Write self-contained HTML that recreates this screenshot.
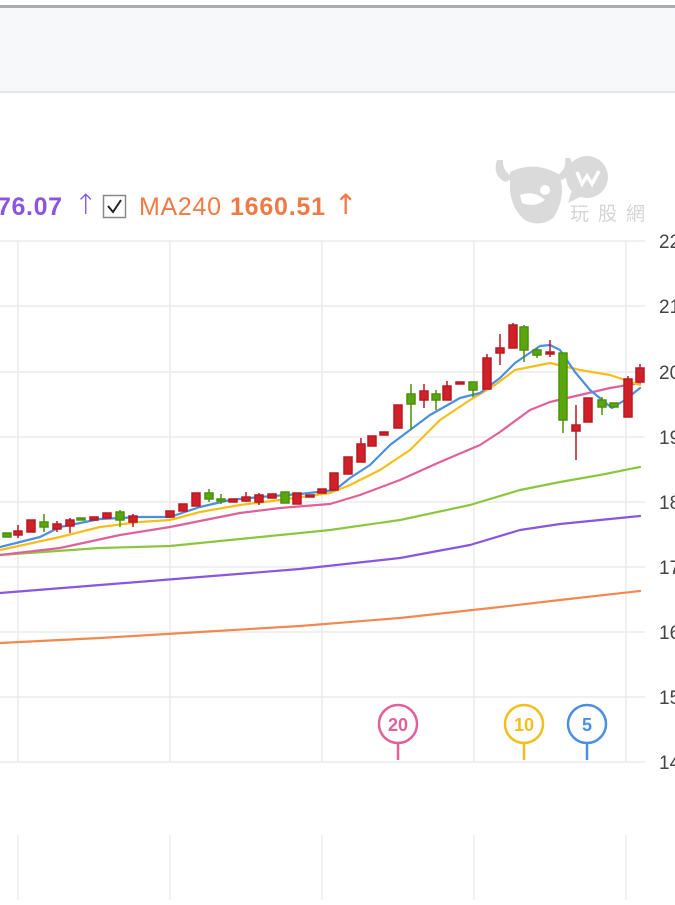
<!DOCTYPE html><html><head><meta charset="utf-8"><style>
body{margin:0;width:675px;height:900px;overflow:hidden;background:#fff;font-family:"Liberation Sans","Noto Sans CJK TC",sans-serif}
</style></head><body>
<svg width="675" height="900" viewBox="0 0 675 900" xmlns="http://www.w3.org/2000/svg">
<rect x="0" y="5" width="675" height="3" fill="#a9adb3"/>
<rect x="0" y="8" width="675" height="84" fill="#f7f8fa"/>
<rect x="0" y="91" width="675" height="2" fill="#e6e7ea"/>
<!-- logo -->
<g fill="#dadada">
<path d="M497 160 Q492 175 505 182 L515 178 Q502 172 503 160 Z"/>
<path d="M570 158 Q578 172 562 180 L556 176 Q567 170 565 158 Z"/>
<path d="M510 172 Q535 160 560 175 Q566 200 553 218 Q540 228 525 220 Q512 210 510 190 Z"/>
<circle cx="587" cy="177" r="21"/>
<path d="M572 190 L568 203 L582 196 Z"/>
</g>
<circle cx="545" cy="190" r="5" fill="#fff"/>
<path d="M520 195 Q535 190 545 200 Q535 208 522 203 Z" fill="#fff"/>
<path d="M577 172 L582 184 L587 176 L592 184 L599 171" stroke="#fff" stroke-width="3.5" fill="none"/>
<text x="570" y="220" font-size="19" fill="#d4d4d4" font-family="Noto Sans CJK TC,sans-serif" textLength="75" lengthAdjust="spacing">玩股網</text>
<!-- legend -->
<text x="-3" y="215" font-size="25" font-weight="bold" fill="#8a55e0" textLength="65">76.07</text>
<text x="74" y="214" font-size="28" fill="#8a55e0" font-family="DejaVu Sans,sans-serif" font-weight="200">↑</text>
<rect x="103.5" y="195.5" width="22" height="22" fill="#fff" stroke="#888" stroke-width="1.5"/>
<path d="M108 206 L113 212 L121 200" stroke="#222" stroke-width="2" fill="none"/>
<text x="139" y="215" font-size="25" fill="#f07a45" textLength="82">MA240</text>
<text x="230" y="215" font-size="25" font-weight="bold" fill="#f07a45" textLength="95">1660.51</text>
<text x="334" y="214" font-size="28" fill="#f07a45" font-family="DejaVu Sans,sans-serif">↑</text>
<!-- grid -->
<g stroke="#ececec" stroke-width="1.5">
<line x1="0" y1="241" x2="645" y2="241"/><line x1="0" y1="306" x2="645" y2="306"/><line x1="0" y1="372" x2="645" y2="372"/><line x1="0" y1="437" x2="645" y2="437"/><line x1="0" y1="502" x2="645" y2="502"/><line x1="0" y1="567" x2="645" y2="567"/><line x1="0" y1="632" x2="645" y2="632"/><line x1="0" y1="697" x2="645" y2="697"/><line x1="0" y1="762" x2="645" y2="762"/>
<line x1="18" y1="241" x2="18" y2="762"/><line x1="170" y1="241" x2="170" y2="762"/><line x1="322" y1="241" x2="322" y2="762"/><line x1="474" y1="241" x2="474" y2="762"/><line x1="626" y1="241" x2="626" y2="762"/>
<line x1="18" y1="835" x2="18" y2="900"/><line x1="170" y1="835" x2="170" y2="900"/><line x1="322" y1="835" x2="322" y2="900"/><line x1="474" y1="835" x2="474" y2="900"/><line x1="626" y1="835" x2="626" y2="900"/>
</g>
<g font-size="19" fill="#444">
<text x="659" y="248">22</text><text x="659" y="313">21</text><text x="659" y="379">20</text><text x="659" y="444">19</text><text x="659" y="509">18</text><text x="659" y="574">17</text><text x="659" y="639">16</text><text x="659" y="704">15</text><text x="659" y="769">14</text>
</g>
<!-- MA lines -->
<g fill="none" stroke-width="2.2" stroke-linejoin="round" stroke-linecap="round">
<polyline stroke="#f08850" points="0,643 100,638 200,632 300,626 400,618 500,607 560,600 640,591"/>
<polyline stroke="#8a55e0" points="0,593 100,585 200,577 300,569 400,558 470,545 520,530 560,524 600,520 640,516"/>
<polyline stroke="#8cc63e" points="0,555 100,548 170,546 250,538 330,530 400,520 470,505 520,490 560,482 600,475 640,467"/>
<polyline stroke="#e0609a" points="0,555 60,548 120,535 170,527 200,521 240,513 280,508 330,504 360,495 400,480 440,462 480,445 500,432 530,410 550,402 580,395 610,388 640,383"/>
<polyline stroke="#f6be1c" points="0,550 60,537 100,527 140,522 170,520 200,512 240,505 280,500 330,493 350,485 380,470 410,450 440,420 470,400 495,385 515,370 550,363 580,370 610,375 640,385"/>
<polyline stroke="#4a8fe0" points="0,547 40,537 60,527 100,519 140,517 170,517 200,507 230,500 260,497 300,494 335,490 350,478 370,465 390,445 410,430 430,415 460,398 480,393 500,378 515,363 540,346 550,345 560,350 575,372 590,390 612,408 625,400 640,388"/>
</g>
<!-- candles -->
<g stroke-width="1.5">
<g fill="#d0202a" stroke="#b81820">
<line x1="18" y1="525" x2="18" y2="538"/><rect x="14" y="531" width="8" height="4"/>
<rect x="27" y="520" width="8" height="12"/>
<line x1="57" y1="521" x2="57" y2="532"/><rect x="53" y="524" width="8" height="5"/>
<line x1="70" y1="518" x2="70" y2="533"/><rect x="66" y="520" width="8" height="6"/>
<rect x="90" y="517" width="8" height="3"/>
<rect x="103" y="513" width="8" height="5"/>
<line x1="133" y1="514" x2="133" y2="527"/><rect x="129" y="516" width="8" height="6"/>
<rect x="166" y="511" width="8" height="6"/>
<rect x="179" y="504" width="8" height="7"/>
<rect x="192" y="493" width="8" height="13"/>
<rect x="229" y="499" width="8" height="3"/>
<line x1="246" y1="492" x2="246" y2="502"/><rect x="242" y="497" width="8" height="4"/>
<line x1="259" y1="493" x2="259" y2="505"/><rect x="255" y="495" width="8" height="7"/>
<rect x="268" y="494" width="8" height="4"/>
<rect x="293" y="493" width="8" height="11"/>
<rect x="306" y="495" width="8" height="2"/>
<rect x="318" y="489" width="8" height="4"/>
<rect x="330" y="473" width="8" height="17"/>
<rect x="344" y="457" width="8" height="17"/>
<line x1="361" y1="438" x2="361" y2="462"/><rect x="357" y="444" width="8" height="18"/>
<rect x="368" y="436" width="8" height="10"/>
<rect x="380" y="432" width="8" height="3"/>
<rect x="394" y="405" width="8" height="23"/>
<line x1="424" y1="384" x2="424" y2="408"/><rect x="420" y="391" width="8" height="9"/>
<line x1="447" y1="381" x2="447" y2="400"/><rect x="443" y="386" width="8" height="14"/>
<rect x="456" y="382" width="8" height="2"/>
<line x1="487" y1="354" x2="487" y2="389"/><rect x="483" y="358" width="8" height="31"/>
<line x1="500" y1="334" x2="500" y2="365"/><rect x="496" y="348" width="8" height="5"/>
<line x1="513" y1="323" x2="513" y2="348"/><rect x="509" y="325" width="8" height="23"/>
<line x1="550" y1="340" x2="550" y2="357"/><rect x="546" y="352" width="8" height="2"/>
<line x1="576" y1="405" x2="576" y2="460"/><rect x="572" y="425" width="8" height="6"/>
<rect x="584" y="398" width="8" height="24"/>
<line x1="628" y1="376" x2="628" y2="417"/><rect x="624" y="379" width="8" height="38"/>
<line x1="640" y1="364" x2="640" y2="382"/><rect x="636" y="368" width="8" height="14"/>
</g>
<g fill="#5aa60e" stroke="#4a9008">
<rect x="3" y="533" width="8" height="4"/>
<line x1="44" y1="514" x2="44" y2="532"/><rect x="40" y="522" width="8" height="5"/>
<rect x="77" y="518" width="8" height="2"/>
<line x1="120" y1="510" x2="120" y2="527"/><rect x="116" y="512" width="8" height="8"/>
<line x1="209" y1="489" x2="209" y2="502"/><rect x="205" y="493" width="8" height="6"/>
<line x1="221" y1="494" x2="221" y2="504"/><rect x="217" y="499" width="8" height="2"/>
<rect x="281" y="492" width="8" height="11"/>
<line x1="411" y1="384" x2="411" y2="430"/><rect x="407" y="394" width="8" height="10"/>
<line x1="436" y1="390" x2="436" y2="410"/><rect x="432" y="394" width="8" height="6"/>
<line x1="473" y1="382" x2="473" y2="397"/><rect x="469" y="382" width="8" height="8"/>
<line x1="524" y1="325" x2="524" y2="362"/><rect x="520" y="327" width="8" height="23"/>
<line x1="537" y1="348" x2="537" y2="358"/><rect x="533" y="350" width="8" height="5"/>
<line x1="563" y1="353" x2="563" y2="433"/><rect x="559" y="353" width="8" height="67"/>
<line x1="602" y1="397" x2="602" y2="415"/><rect x="598" y="400" width="8" height="7"/>
<rect x="610" y="403" width="8" height="4"/>
</g>
</g>
<!-- markers -->
<g stroke-width="2.5" fill="#fff" font-weight="bold" font-size="18" text-anchor="middle">
<g stroke="#e0609a"><line x1="398" y1="743" x2="398" y2="760"/><circle cx="398" cy="724" r="19"/></g>
<text x="398" y="731" fill="#e0609a">20</text>
<g stroke="#f6be1c"><line x1="524" y1="743" x2="524" y2="760"/><circle cx="524" cy="724" r="19"/></g>
<text x="524" y="731" fill="#f6be1c">10</text>
<g stroke="#4a8fe0"><line x1="587" y1="743" x2="587" y2="760"/><circle cx="587" cy="724" r="19"/></g>
<text x="587" y="731" fill="#4a8fe0">5</text>
</g>
</svg>
</body></html>
